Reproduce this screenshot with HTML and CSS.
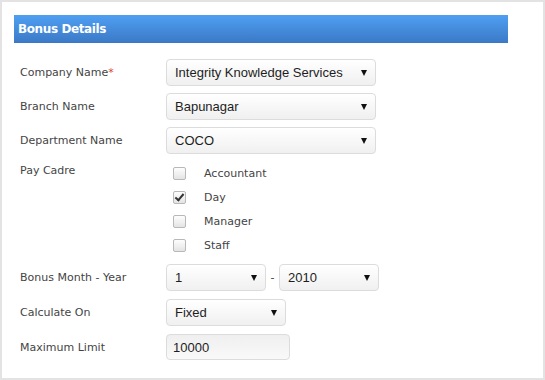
FILE: index.html
```html
<!DOCTYPE html>
<html>

<head>
    <title>Bonus Details</title>
    <link rel="stylesheet" href="styles.css">
</head>

<body>
    <div class="panel">
        <div class="panel-title">Bonus Details</div>

        <div class="form">
            <div class="row">
                <label class="label">Company Name<span class="req">*</span></label>
                <div class="select wide">
                    <select>
                        <option>Integrity Knowledge Services</option>
                    </select>
                </div>
            </div>

            <div class="row">
                <label class="label">Branch Name</label>
                <div class="select wide">
                    <select>
                        <option>Bapunagar</option>
                    </select>
                </div>
            </div>

            <div class="row">
                <label class="label">Department Name</label>
                <div class="select wide">
                    <select>
                        <option>COCO</option>
                    </select>
                </div>
            </div>

            <div class="row top">
                <label class="label cadre">Pay Cadre</label>
                <div class="checks">
                    <label class="check"><input type="checkbox"><span>Accountant</span></label>
                    <label class="check"><input type="checkbox" checked><span>Day</span></label>
                    <label class="check"><input type="checkbox"><span>Manager</span></label>
                    <label class="check"><input type="checkbox"><span>Staff</span></label>
                </div>
            </div>

            <div class="row loose">
                <label class="label">Bonus Month - Year</label>
                <div class="pair">
                    <div class="select small">
                        <select>
                            <option>1</option>
                        </select>
                    </div>
                    <span class="dash">-</span>
                    <div class="select small">
                        <select>
                            <option>2010</option>
                        </select>
                    </div>
                </div>
            </div>

            <div class="row loose">
                <label class="label">Calculate On</label>
                <div class="select medium">
                    <select>
                        <option>Fixed</option>
                    </select>
                </div>
            </div>

            <div class="row">
                <label class="label">Maximum Limit</label>
                <input class="text" type="text" value="10000">
            </div>
        </div>
    </div>
</body>

</html>
```

FILE: styles.css
```css
body {
    margin: 0;
    background: #ffffff;
}

.panel {
    box-sizing: border-box;
    width: 545px;
    height: 380px;
    border: 2px solid #e3e3e3;
    padding-top: 13px;
}

.panel-title {
    box-sizing: border-box;
    margin-left: 12px;
    width: 494px;
    height: 28px;
    line-height: 28px;
    padding-left: 4px;
    background: linear-gradient(to bottom, #4f9ff2, #3b79c6);
    color: #ffffff;
    font-family: "DejaVu Sans", Verdana, sans-serif;
    font-weight: bold;
    font-size: 12px;
    letter-spacing: -0.4px;
}

.form {
    padding: 16px 0 0 18px;
}

.row {
    display: flex;
    align-items: center;
    margin-bottom: 7px;
}

.row.loose {
    margin-bottom: 8px;
}

.row.top {
    align-items: flex-start;
}

.label {
    width: 146px;
    flex: none;
    font-family: "DejaVu Sans", Verdana, sans-serif;
    font-size: 11px;
    color: #444444;
}

.label.cadre {
    line-height: 19px;
}

.req {
    color: #e0402e;
}

.select {
    position: relative;
    height: 27px;
}

.select select {
    -webkit-appearance: none;
    appearance: none;
    box-sizing: border-box;
    width: 100%;
    height: 100%;
    border: 1px solid #dcdcdc;
    border-radius: 4px;
    background: linear-gradient(to bottom, #ffffff, #f0f0f0);
    padding: 0 20px 0 8px;
    font-family: "Liberation Sans", Arial, sans-serif;
    font-size: 13px;
    color: #1e1e1e;
    outline: none;
}

.select::after {
    content: "";
    position: absolute;
    right: 9px;
    top: 11px;
    border-left: 3px solid transparent;
    border-right: 3px solid transparent;
    border-top: 6px solid #111111;
    pointer-events: none;
}

.wide {
    width: 210px;
}

.medium {
    width: 120px;
}

.small {
    width: 100px;
}

.pair {
    display: flex;
    align-items: center;
}

.dash {
    width: 13px;
    text-align: center;
    font-family: "DejaVu Sans", Verdana, sans-serif;
    font-size: 11px;
    color: #444444;
}

.checks {
    display: flex;
    flex-direction: column;
}

.check {
    display: flex;
    align-items: center;
    height: 24px;
    font-family: "DejaVu Sans", Verdana, sans-serif;
    font-size: 11px;
    color: #444444;
}

.check input {
    -webkit-appearance: none;
    appearance: none;
    box-sizing: border-box;
    width: 13px;
    height: 13px;
    margin: 0 18px 0 7px;
    border: 1px solid #b8b8b8;
    border-radius: 2px;
    background: linear-gradient(to bottom, #fdfdfd, #e4e4e4);
    position: relative;
}

.check input:checked::after {
    content: "";
    position: absolute;
    left: 3px;
    top: 0px;
    width: 3px;
    height: 7px;
    border-right: 2px solid #333333;
    border-bottom: 2px solid #333333;
    transform: rotate(40deg);
}

.text {
    box-sizing: border-box;
    width: 124px;
    height: 26px;
    border: 1px solid #dcdcdc;
    border-radius: 4px;
    background: linear-gradient(to bottom, #efefef, #f9f9f9);
    padding: 0 6px;
    font-family: "Liberation Sans", Arial, sans-serif;
    font-size: 13px;
    color: #1e1e1e;
    outline: none;
}
```
